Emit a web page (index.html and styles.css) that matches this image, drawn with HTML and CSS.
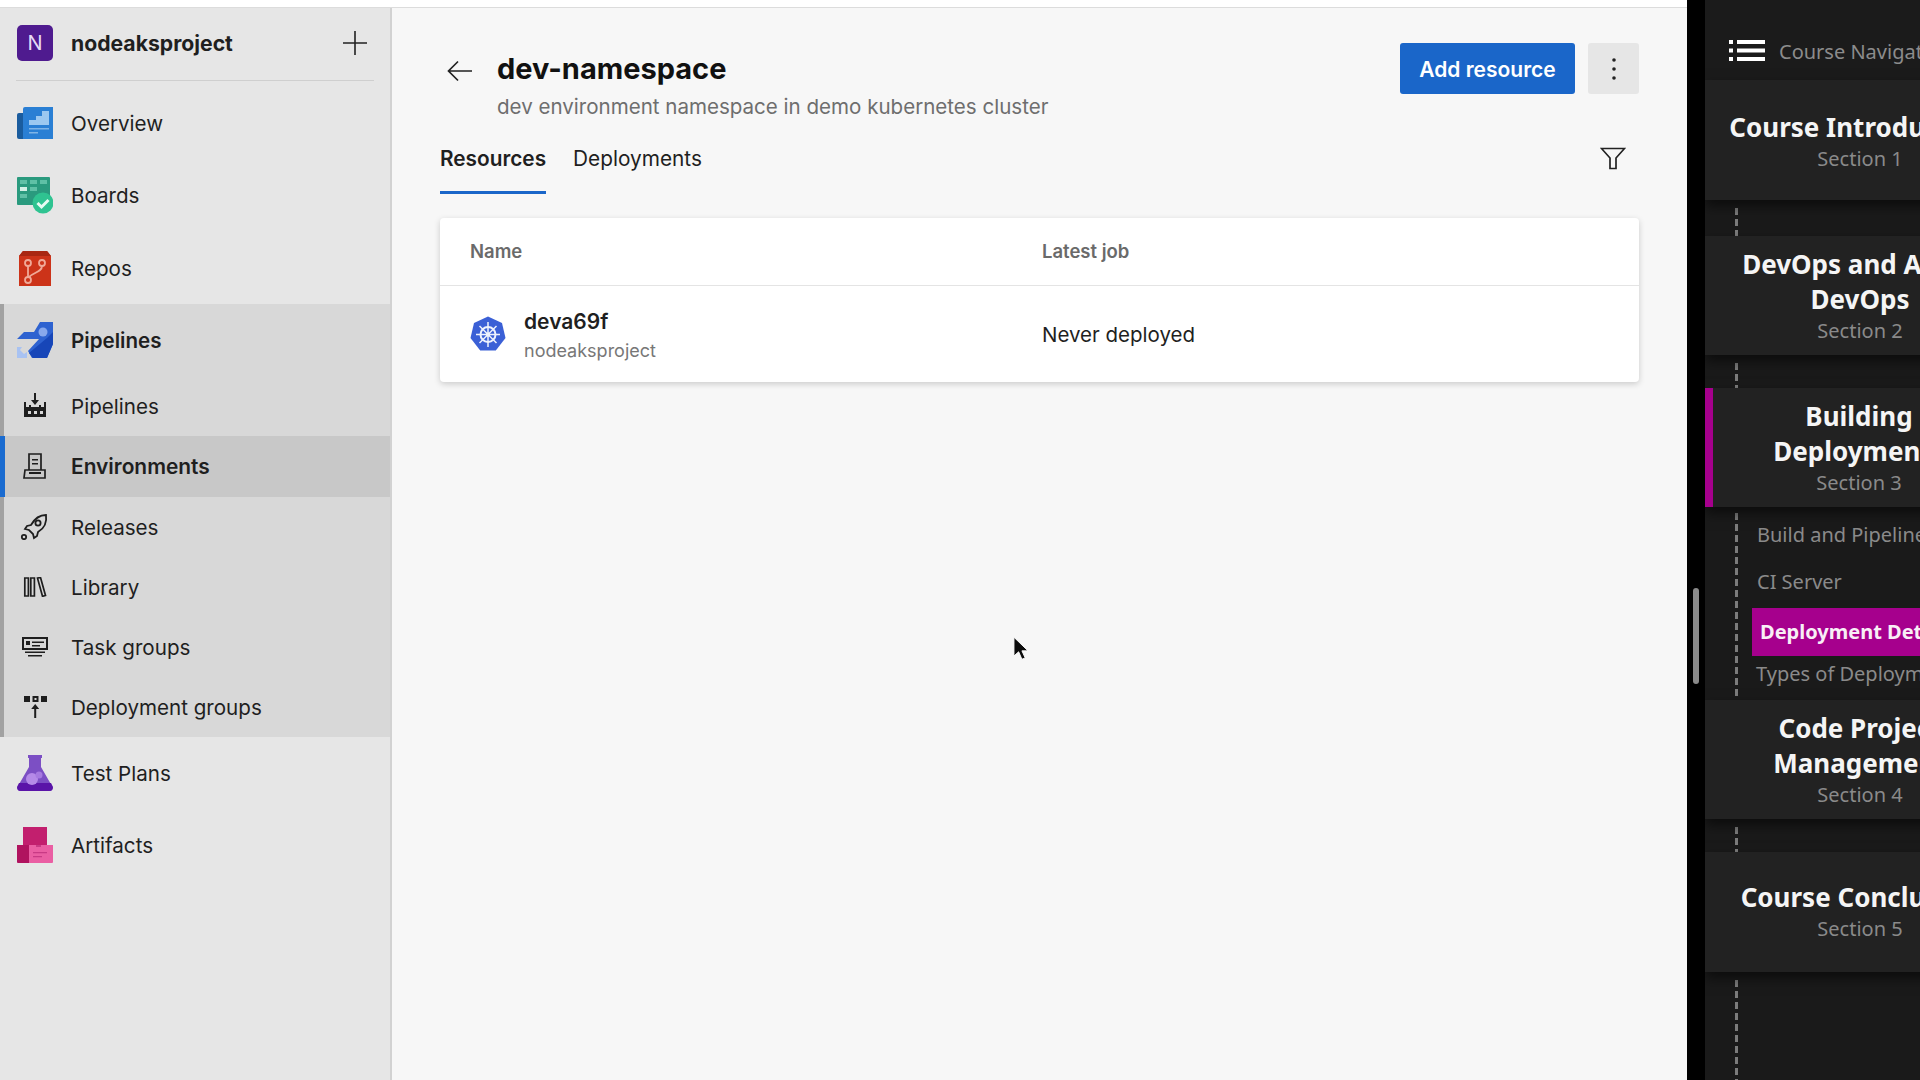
FILE: index.html
```html
<!DOCTYPE html>
<html lang="en">
<head>
    <meta charset="UTF-8">
    <title>dev-namespace - Environments</title>
    <link rel="stylesheet" href="styles.css">
</head>
<body>
<div class="screen">
    <div class="browser">
        <div class="top-strip"></div>
        <div class="browser-body">
            <aside class="sidebar">
                <div class="project">
                    <span class="project-tile">N</span>
                    <span class="project-name">nodeaksproject</span>
                    <svg class="project-add" width="26" height="26" viewBox="0 0 26 26"><path d="M13 1v24M1 13h24" stroke="#222" stroke-width="1.6" fill="none"/></svg>
                </div>
                <nav class="nav">
                    <a class="nav-item">
                        <svg class="nav-icon" width="36" height="36" viewBox="0 0 36 36"><path d="M0 10q0-2 2-2h8v26H2q-2 0-2-2z" fill="#1a5c9e"/><path d="M6 4q0-2 2-2h28v32H6z" fill="#2a7fd4"/><path d="M12 20h20V6h-7v5h-6v4h-7z" fill="#9cc8f0"/><path d="M12 23h20v1.5H12zM12 27h9v1.5h-9z" fill="#7fb4e6"/></svg>
                        <span>Overview</span>
                    </a>
                    <a class="nav-item">
                        <svg class="nav-icon" width="36" height="38" viewBox="0 0 36 38"><rect width="33" height="28" y="1" rx="1" fill="#2a9a7e"/><path d="M3 4h7v4H3zM13 4h7v4h-7zM23 4h7v4h-7zM13 11h7v4h-7zM3 18h7v4H3z" fill="#5fc0a6"/><path d="M3 11h7v4H3z" fill="#d4f0e6"/><circle cx="26" cy="27" r="10.5" fill="#2fc391"/><path d="M20.5 27l4 4 7-7" stroke="#e8fbf4" stroke-width="3" fill="none"/></svg>
                        <span>Boards</span>
                    </a>
                    <a class="nav-item">
                        <svg class="nav-icon" width="36" height="36" viewBox="0 0 36 36"><path d="M2 6l4-5h24l4 5v30H2z" fill="#cc3319"/><path d="M6 1h24l4 5H2z" fill="#a92712"/><g fill="none" stroke="#f0a998" stroke-width="1.8"><circle cx="11" cy="13" r="3"/><circle cx="25" cy="13" r="3"/><circle cx="11" cy="30" r="3"/><path d="M11 16v11M25 16c0 6-8 6-13 11"/></g></svg>
                        <span>Repos</span>
                    </a>
                    <div class="nav-group">
                        <a class="nav-item nav-group-head">
                            <svg class="nav-icon" width="36" height="36" viewBox="0 0 36 36"><path d="M23 0h13v22l-6 14H15l-4-7 11-12H0l7-7h10z" fill="#2e62d0"/><path d="M30 16L12 31l4 5h14l6-14V10z" fill="#1746b8"/><circle cx="26" cy="10" r="4.5" fill="#88a8ec"/><path d="M0 25h5l-2 3 4 4 3-2v6H0z" fill="#a8c2f2"/></svg>
                            <span>Pipelines</span>
                        </a>
                        <a class="nav-item nav-sub">
                            <svg class="nav-icon" width="36" height="26" viewBox="0 0 36 26"><g fill="#1e1e1e"><path d="M17 0h2v7h3l-4 5-4-5h3z"/><path d="M7 9h2v5h3v-2h2v2h8v-2h2v2h3V9h2v15H7z"/></g><path d="M11 18h3v3h-3zM17 18h3v3h-3zM23 18h3v3h-3z" fill="#d8d8d8"/></svg>
                            <span>Pipelines</span>
                        </a>
                        <a class="nav-item nav-sub is-active">
                            <svg class="nav-icon" width="36" height="26" viewBox="0 0 36 26"><g fill="none" stroke="#1e1e1e" stroke-width="1.7"><path d="M12 17V1h12v16"/><path d="M8 17h20v8H7z"/></g><path d="M15 6h6v1.6h-6zM15 10h6v1.6h-6z" fill="#1e1e1e"/><path d="M12 19h12v2H12z" fill="#1e1e1e"/></svg>
                            <span>Environments</span>
                        </a>
                        <a class="nav-item nav-sub">
                            <svg class="nav-icon" width="36" height="26" viewBox="0 0 36 26"><g fill="none" stroke="#1e1e1e" stroke-width="1.8"><path d="M29 1c-6 0-11 3-15 10l-4 1-2 3 4 1 4 4 1 4 3-2 1-4c7-4 9-10 8-17z"/><circle cx="21" cy="9" r="2.6"/><circle cx="7" cy="23" r="2.2"/></g></svg>
                            <span>Releases</span>
                        </a>
                        <a class="nav-item nav-sub">
                            <svg class="nav-icon" width="36" height="20" viewBox="0 0 36 20"><g fill="none" stroke="#1e1e1e" stroke-width="1.7"><path d="M7.800 1h3.600v18H7.800zM13.800 1h3.600v18h-3.600z"/><path d="M20.500 1.200l3-.7 5 18-3 .8z"/></g></svg>
                            <span>Library</span>
                        </a>
                        <a class="nav-item nav-sub">
                            <svg class="nav-icon" width="36" height="20" viewBox="0 0 36 20"><path d="M6 1h24v11H6z" fill="none" stroke="#1e1e1e" stroke-width="2"/><path d="M9 4h4v4H9z" fill="#1e1e1e"/><path d="M15 4.500h12v1.500H15zM15 8h8v1.500h-8zM8 14.500h20V16H8zM11 18h14v1.500H11z" fill="#1e1e1e"/></svg>
                            <span>Task groups</span>
                        </a>
                        <a class="nav-item nav-sub">
                            <svg class="nav-icon" width="36" height="22" viewBox="0 0 36 22"><path d="M7 0h6v6H7zM24 0h6v6h-6z" fill="#1e1e1e"/><path d="M16.500 1h4v4h-4z" fill="none" stroke="#1e1e1e" stroke-width="2"/><path d="M17.200 22V13h-3l4-5 4 5h-3v9z" fill="#1e1e1e"/></svg>
                            <span>Deployment groups</span>
                        </a>
                    </div>
                    <a class="nav-item">
                        <svg class="nav-icon" width="36" height="36" viewBox="0 0 36 36"><path d="M11 0h14v3h-1v9l11 19q2 5-3 5H4q-5 0-3-5l11-19V3h-1z" fill="#7c4fc4"/><path d="M2 28h32l2 4q0 4-4 4H4q-4 0-4-4z" fill="#5a14a8"/><circle cx="15" cy="24" r="6" fill="#b58ae8"/><circle cx="22" cy="20" r="3.500" fill="#a67ae0"/></svg>
                        <span>Test Plans</span>
                    </a>
                    <a class="nav-item">
                        <svg class="nav-icon" width="36" height="36" viewBox="0 0 36 36"><path d="M6 0h24v19H6z" fill="#c21f6e"/><path d="M0 18h12v18H1q-1 0-1-1z" fill="#b0135f"/><path d="M12 18h24v17q0 1-1 1H12z" fill="#ea5ea3"/><path d="M19 18h5v2h-5zM16 25h14v1.200H16zM16 29h9v1.200h-9z" fill="#c83a85"/></svg>
                        <span>Artifacts</span>
                    </a>
                </nav>
            </aside>
            <main class="main">
                <header class="page-head">
                    <svg class="back" width="26" height="22" viewBox="0 0 26 22"><path d="M25 11H2M11 1.500L1.500 11l9.500 9.500" stroke="#222" stroke-width="1.700" fill="none"/></svg>
                    <div class="page-title">
                        <h1>dev-namespace</h1>
                        <p>dev environment namespace in demo kubernetes cluster</p>
                    </div>
                    <button class="btn-primary">Add resource</button>
                    <button class="btn-more" aria-label="More">
                        <svg width="4" height="22" viewBox="0 0 4 22"><circle cx="2" cy="2" r="1.800"/><circle cx="2" cy="11" r="1.800"/><circle cx="2" cy="20" r="1.800"/></svg>
                    </button>
                </header>
                <div class="tabs">
                    <a class="tab is-selected">Resources</a>
                    <a class="tab">Deployments</a>
                    <svg class="filter" width="26" height="23" viewBox="0 0 26 23"><path d="M1.500 1.500h23L16 11v10.500h-6V11z" fill="none" stroke="#222" stroke-width="1.700"/></svg>
                </div>
                <section class="card">
                    <div class="card-row card-head">
                        <div class="col-name">Name</div>
                        <div>Latest job</div>
                    </div>
                    <div class="card-row card-item">
                        <div class="col-name resource">
                            <svg width="36" height="36" viewBox="0 0 36 36"><path d="M18 0.500L32 7l3.500 15-9.700 12.500H10.200L0.500 22 4 7z" fill="#3b60d6"/><g fill="none" stroke="#eef2fc"><circle cx="18" cy="18.500" r="7.500" stroke-width="2"/><path d="M18 6v25M6 18.500h24M9.500 10l17 17M26.500 10l-17 17" stroke-width="1.500"/></g><circle cx="18" cy="18.500" r="2" fill="#eef2fc"/></svg>
                            <div class="resource-text">
                                <div class="resource-name">deva69f</div>
                                <div class="resource-sub">nodeaksproject</div>
                            </div>
                        </div>
                        <div class="job">Never deployed</div>
                    </div>
                </section>
                <svg class="cursor" width="15" height="25" viewBox="0 0 16 26"><path d="M1 1v20l5-4.500 3.500 8 3.500-1.500-3.500-7.500H16z" fill="#0c0c0c" stroke="#fff" stroke-width="1"/></svg>
            </main>
        </div>
    </div>
    <div class="gutter"><div class="gutter-thumb"></div></div>
    <div class="course">
        <div class="course-inner">
            <div class="course-top">
                <svg width="36" height="21" viewBox="0 0 36 21"><path d="M0 0h4v4H0zM8 0h28v4H8zM0 8.500h4v4H0zM8 8.500h28v4H8zM0 17h4v4H0zM8 17h28v4H8z" fill="#fff"/></svg>
                <span>Course Navigation</span>
            </div>
            <div class="section s-tall">
                <div class="section-title">Course Introduction</div>
                <div class="section-num">Section 1</div>
            </div>
            <div class="dashes dashes-first"></div>
            <div class="section">
                <div class="section-title">DevOps and Azure<br>DevOps</div>
                <div class="section-num">Section 2</div>
            </div>
            <div class="dashes"></div>
            <div class="section is-current">
                <div class="section-title">Building<br>Deployments</div>
                <div class="section-num">Section 3</div>
            </div>
            <div class="lessons">
                <div class="dashes-long"></div>
                <div class="lesson-list">
                    <div class="lesson l1">Build and Pipelines</div>
                    <div class="lesson l2">CI Server</div>
                    <div class="lesson lesson-on">Deployment Details</div>
                    <div class="lesson l4">Types of Deployment</div>
                </div>
            </div>
            <div class="section">
                <div class="section-title">Code Project<br>Management</div>
                <div class="section-num">Section 4</div>
            </div>
            <div class="dashes"></div>
            <div class="section s-tall s-low">
                <div class="section-title">Course Conclusion</div>
                <div class="section-num">Section 5</div>
            </div>
            <div class="dashes dashes-end"></div>
        </div>
    </div>
</div>
</body>
</html>
```
FILE: styles.css
```css
* {
    box-sizing: border-box;
}
body {
    margin: 0;
    background: #000;
    font-family: Inter, "Liberation Sans", sans-serif;
    color: #1f1f1f;
}
button {
    font-family: inherit;
    border: none;
}
.screen {
    display: flex;
    height: 1080px;
    overflow: hidden;
}

/* left browser part */
.browser {
    width: 1687px;
    display: flex;
    flex-direction: column;
    background: #f7f7f7;
}
.top-strip {
    height: 8px;
    background: #fff;
    border-bottom: 1px solid #dcdcdc;
}
.browser-body {
    flex: 1;
    display: flex;
}

/* sidebar */
.sidebar {
    width: 392px;
    background: #e6e6e6;
    border-right: 2px solid #d2d2d2;
}
.project {
    height: 73px;
    margin: 0 16px 0 0;
    padding: 0 0 3px 17px;
    display: flex;
    align-items: center;
    position: relative;
}
.project::after {
    content: "";
    position: absolute;
    left: 16px;
    right: 0;
    bottom: 0;
    height: 1px;
    background: #cfcfcf;
}
.project-tile {
    width: 36px;
    height: 36px;
    border-radius: 5px;
    background: #4f1b8f;
    color: #e6daf5;
    font-size: 20px;
    display: flex;
    align-items: center;
    justify-content: center;
}
.project-name {
    margin-left: 18px;
    font-size: 21.2px;
    font-weight: 700;
    flex: 1;
}
.project-add {
    margin-right: 6px;
}
.nav {
    padding-top: 6px;
}
.nav-item {
    height: 72.3px;
    padding-left: 17px;
    display: flex;
    align-items: center;
    font-size: 20.6px;
}
.nav-item span {
    padding-top: 1px;
}
.nav-icon {
    width: 36px;
    margin-right: 18px;
    flex: none;
}
.nav-group {
    background: #d8d8d8;
    border-left: 4px solid #a2a2a2;
    height: 433px;
}
.nav-group .nav-item {
    padding-left: 13px;
}
.nav-group-head {
    font-weight: 600;
}
.nav-item.nav-sub {
    height: 60.2px;
}
.nav-item.is-active {
    background: #c8c8c8;
    font-size: 20.9px;
    font-weight: 600;
    margin-left: -4px;
    padding-left: 12px;
    border-left: 5px solid #1a6bd0;
}

/* main content */
.main {
    flex: 1;
    padding: 0 48px;
    position: relative;
}
.page-head {
    display: flex;
    align-items: flex-start;
    padding: 35px 0 0 7px;
}
.back {
    margin-top: 17px;
    margin-right: 24px;
    flex: none;
}
.page-title {
    flex: 1;
    padding-top: 8px;
}
.page-title h1 {
    margin: 0;
    font-size: 29px;
    line-height: 36px;
    font-weight: 700;
    color: #111;
}
.page-title p {
    margin: 7px 0 0;
    font-size: 20.55px;
    line-height: 26px;
    color: #6e6e6e;
}
.btn-primary {
    width: 175px;
    height: 51px;
    padding-top: 2px;
    background: #1a66c9;
    color: #fff;
    font-size: 21px;
    font-weight: 600;
    border-radius: 3px;
}
.btn-more {
    width: 51px;
    height: 51px;
    margin-left: 13px;
    background: #e6e6e6;
    border-radius: 3px;
    display: flex;
    align-items: center;
    justify-content: center;
}
.btn-more svg {
    fill: #222;
}
.tabs {
    display: flex;
    align-items: flex-start;
    gap: 27px;
    margin-top: 26px;
}
.tab {
    font-size: 20.8px;
    line-height: 26px;
    padding-bottom: 19px;
    border-bottom: 3px solid transparent;
}
.tab.is-selected {
    font-weight: 600;
    border-bottom-color: #1a66c9;
}
.filter {
    margin-left: auto;
    margin-right: 13px;
    margin-top: 1px;
}
.card {
    margin-top: 24px;
    background: #fff;
    border-radius: 4px;
    box-shadow: 0 2px 6px rgba(0, 0, 0, 0.18);
}
.card-row {
    display: flex;
    align-items: center;
}
.col-name {
    width: 602px;
    padding-left: 30px;
}
.card-head {
    height: 68px;
    padding-bottom: 2px;
    border-bottom: 1px solid #e4e4e4;
    font-size: 18.5px;
    font-weight: 600;
    color: #6a6a6a;
}
.card-item {
    height: 96px;
}
.resource {
    display: flex;
    align-items: center;
    gap: 18px;
}
.resource-text {
    margin-top: 3px;
}
.resource-name {
    font-size: 21px;
    line-height: 26px;
    font-weight: 600;
}
.resource-sub {
    font-size: 18px;
    line-height: 24px;
    margin-top: 4px;
    color: #777;
}
.job {
    font-size: 20.5px;
}
.cursor {
    position: absolute;
    left: 621px;
    top: 628px;
}

/* black strip with the scroll thumb */
.gutter {
    width: 18px;
    background: #000;
    padding: 588px 0 0 6px;
}
.gutter-thumb {
    width: 6px;
    height: 96px;
    border-radius: 3px;
    background: #8a8a8a;
}

/* course navigation, cut off by the window */
.course {
    width: 215px;
    overflow: hidden;
    background: #1a1a1a;
}
.course-inner {
    width: 310px;
    font-family: "Noto Sans", "Open Sans", sans-serif;
}
.course-top {
    height: 80px;
    padding: 40px 0 0 24px;
    display: flex;
    align-items: flex-start;
    gap: 14px;
    background: #1b1b1b;
    color: #8c8c8c;
    font-size: 20px;
    line-height: 24px;
    white-space: nowrap;
}
.section {
    height: 119px;
    background: #222;
    box-shadow: 0 6px 12px rgba(0, 0, 0, 0.55);
    text-align: center;
    display: flex;
    flex-direction: column;
    justify-content: center;
    position: relative;
}
.s-tall {
    height: 120px;
    justify-content: flex-start;
    padding-top: 30px;
}
.s-low {
    padding-top: 28px;
}
.section-title {
    color: #f5f5f5;
    font-size: 26px;
    line-height: 35px;
    font-weight: 700;
    white-space: nowrap;
}
.section-num {
    color: #8a8a8a;
    font-size: 20px;
    line-height: 26px;
    padding-top: 1px;
}
.section.is-current {
    border-left: 8px solid #a6008d;
    padding-right: 10px;
}
.dashes, .dashes-long {
    width: 3px;
    margin-left: 30px;
    background: repeating-linear-gradient(to bottom, #7c7c7c 0, #7c7c7c 7px, transparent 7px, transparent 11px);
}
.dashes {
    height: 33px;
    background-origin: content-box;
    background-clip: content-box;
    padding-top: 8px;
}
.dashes-first {
    height: 36px;
}
.dashes-end {
    height: 108px;
}
.lessons {
    display: flex;
    height: 193px;
}
.dashes-long {
    height: 187px;
    margin-top: 6px;
    flex: none;
}
.lesson-list {
    margin-left: 14px;
    flex: 1;
    color: #8a8a8a;
    font-size: 20px;
    line-height: 26px;
    white-space: nowrap;
}
.lesson {
    padding-left: 5px;
}
.l1 {
    padding-top: 15px;
    height: 51px;
}
.l2 {
    padding-top: 11px;
    height: 50px;
}
.lesson-on {
    height: 48px;
    background: #a6008d;
    color: #f8eef6;
    font-weight: 700;
    line-height: 48px;
    padding-left: 8px;
}
.l4 {
    padding-top: 5px;
    padding-left: 4px;
}
```
